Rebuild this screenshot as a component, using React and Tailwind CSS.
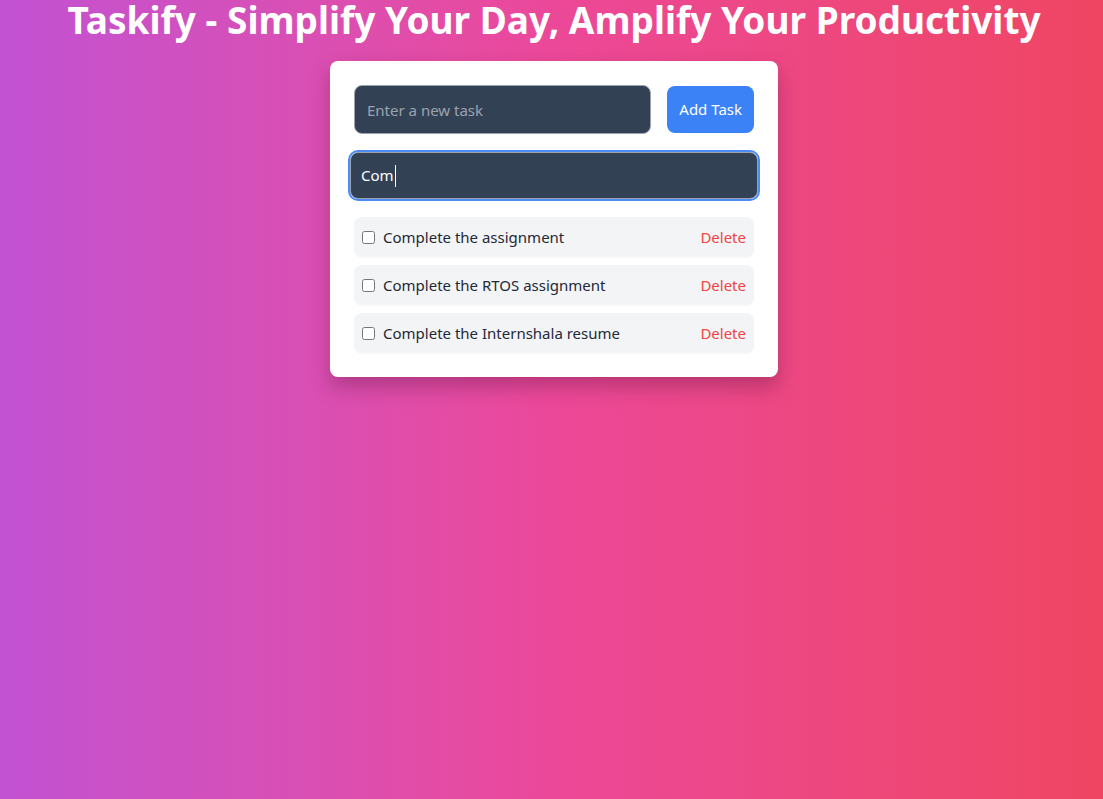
import { useState } from "react";

const initialTasks = [
  { id: 1, text: "Complete the assignment", done: false },
  { id: 2, text: "Complete the RTOS assignment", done: false },
  { id: 3, text: "Complete the Internshala resume", done: false },
];

function TaskItem({ task, onToggle, onDelete }) {
  return (
    <li className="flex items-center justify-between h-10 px-2 rounded-lg bg-[#f3f4f6] shadow-[0_1px_2px_rgba(0,0,0,0.04)]">
      <label className="flex items-center gap-2">
        <input
          type="checkbox"
          checked={task.done}
          onChange={() => onToggle(task.id)}
          className="w-[13px] h-[13px] m-0"
        />
        <span className="text-[15px] text-[#1f2937]">{task.text}</span>
      </label>
      <button onClick={() => onDelete(task.id)} className="text-[15px] text-[#ef4444]">
        Delete
      </button>
    </li>
  );
}

export default function App() {
  const [tasks, setTasks] = useState(initialTasks);
  const [newTask, setNewTask] = useState("");
  const [search] = useState("Com");

  const addTask = () => {
    if (!newTask.trim()) return;
    setTasks([...tasks, { id: Date.now(), text: newTask, done: false }]);
    setNewTask("");
  };

  return (
    <div className="min-h-[799px] pl-[5px] bg-gradient-to-r from-[#c251d3] via-[#ec4899] to-[#ef4562] font-['Noto_Sans','Open_Sans',sans-serif]">
      <h1 className="text-center text-[37px] leading-10 font-bold text-white">
        Taskify - Simplify Your Day, Amplify Your Productivity
      </h1>
      <div className="w-[448px] mx-auto mt-[21px] p-6 bg-white rounded-lg shadow-[0_10px_20px_rgba(90,20,60,0.35)]">
        <div className="flex items-center gap-4">
          <input
            value={newTask}
            onChange={(e) => setNewTask(e.target.value)}
            placeholder="Enter a new task"
            className="flex-1 h-[49px] px-3 rounded-lg border border-[#9ca3af] bg-[#334155] text-white text-[15px] placeholder:text-[#9ca3af] outline-none"
          />
          <button onClick={addTask} className="h-[47px] px-3 rounded-lg bg-[#3b82f6] text-white text-[15px]">
            Add Task
          </button>
        </div>
        <div className="mt-[18px] -mx-1 h-[47px] flex items-center px-[10px] rounded-lg border border-[#9ca3af] bg-[#334155] outline-2 outline-[#4b8bf5]">
          <span className="text-[15px] text-white">{search}</span>
          <span className="w-px h-[22px] bg-white ml-px" />
        </div>
        <ul className="mt-[18px] space-y-2">
          {tasks.map((t) => (
            <TaskItem
              key={t.id}
              task={t}
              onToggle={(id) => setTasks(tasks.map((x) => (x.id === id ? { ...x, done: !x.done } : x)))}
              onDelete={(id) => setTasks(tasks.filter((x) => x.id !== id))}
            />
          ))}
        </ul>
      </div>
    </div>
  );
}
